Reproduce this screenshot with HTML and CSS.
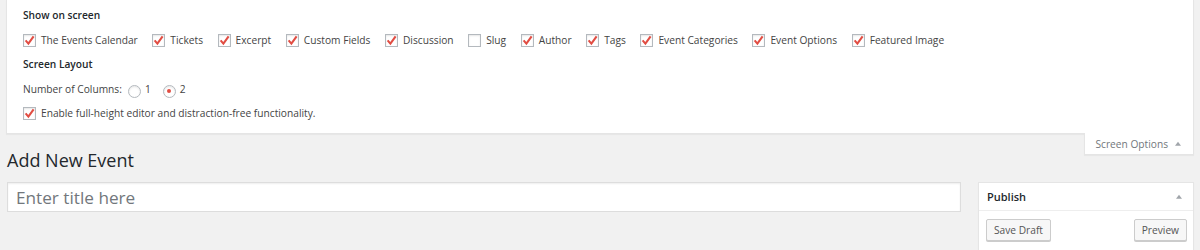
FILE: index.html
```html
<!DOCTYPE html>
<html lang="en">
<head>
<meta charset="utf-8">
<title>Add New Event</title>
<link rel="stylesheet" href="styles.css">
</head>
<body>
<div class="wrap">
  <div class="screen-meta">
    <h5 class="sm-title">Show on screen</h5>
    <div class="cb-row">
      <label class="opt"><span class="cb"><svg viewBox="0 0 13 13"><polyline points="2.6,6.4 5.4,9.6 10.6,2.4"/></svg></span>The Events Calendar</label>
      <label class="opt"><span class="cb"><svg viewBox="0 0 13 13"><polyline points="2.6,6.4 5.4,9.6 10.6,2.4"/></svg></span>Tickets</label>
      <label class="opt"><span class="cb"><svg viewBox="0 0 13 13"><polyline points="2.6,6.4 5.4,9.6 10.6,2.4"/></svg></span>Excerpt</label>
      <label class="opt"><span class="cb"><svg viewBox="0 0 13 13"><polyline points="2.6,6.4 5.4,9.6 10.6,2.4"/></svg></span>Custom Fields</label>
      <label class="opt"><span class="cb"><svg viewBox="0 0 13 13"><polyline points="2.6,6.4 5.4,9.6 10.6,2.4"/></svg></span>Discussion</label>
      <label class="opt"><span class="cb"></span>Slug</label>
      <label class="opt"><span class="cb"><svg viewBox="0 0 13 13"><polyline points="2.6,6.4 5.4,9.6 10.6,2.4"/></svg></span>Author</label>
      <label class="opt"><span class="cb"><svg viewBox="0 0 13 13"><polyline points="2.6,6.4 5.4,9.6 10.6,2.4"/></svg></span>Tags</label>
      <label class="opt"><span class="cb"><svg viewBox="0 0 13 13"><polyline points="2.6,6.4 5.4,9.6 10.6,2.4"/></svg></span>Event Categories</label>
      <label class="opt"><span class="cb"><svg viewBox="0 0 13 13"><polyline points="2.6,6.4 5.4,9.6 10.6,2.4"/></svg></span>Event Options</label>
      <label class="opt"><span class="cb"><svg viewBox="0 0 13 13"><polyline points="2.6,6.4 5.4,9.6 10.6,2.4"/></svg></span>Featured Image</label>
    </div>
    <h5 class="sm-title layout">Screen Layout</h5>
    <div class="cols-row">
      <span class="cols-label">Number of Columns:</span>
      <label class="ropt"><span class="radio"></span>1</label>
      <label class="ropt"><span class="radio on"></span>2</label>
    </div>
    <div class="cb-row enable">
      <label class="opt"><span class="cb"><svg viewBox="0 0 13 13"><polyline points="2.6,6.4 5.4,9.6 10.6,2.4"/></svg></span>Enable full-height editor and distraction-free functionality.</label>
    </div>
  </div>

  <div class="head-row">
    <h1 class="page-title">Add New Event</h1>
    <div class="so-tab">Screen Options <svg class="arr" viewBox="0 0 7 5"><polygon points="0,5 3.5,0.5 7,5"/></svg></div>
  </div>

  <div class="main">
    <div class="body-col">
      <input class="title-input" type="text" placeholder="Enter title here">
    </div>
    <div class="side">
      <div class="postbox">
        <div class="hndle"><span>Publish</span><svg class="arr" viewBox="0 0 7 5"><polygon points="0,5 3.5,0.5 7,5"/></svg></div>
        <div class="pub-actions">
          <span class="btn">Save Draft</span>
          <span class="btn">Preview</span>
        </div>
      </div>
    </div>
  </div>
</div>
</body>
</html>
```

FILE: styles.css
```css
* { box-sizing: border-box; }

body {
  margin: 0;
  background: #f1f1f1;
  font-family: "Open Sans", "DejaVu Sans", sans-serif;
  font-size: 10.2px;
  color: #444;
}

.wrap {
  padding: 0 6px;
}

/* Screen options panel */
.screen-meta {
  background: #fff;
  border: 1px solid #e5e5e5;
  border-top: 0;
  box-shadow: 0 1px 1px rgba(0, 0, 0, .04);
  height: 134px;
  padding: 8px 16px 0 15px;
}

.sm-title {
  margin: 0;
  font-size: 10.2px;
  font-weight: 600;
  line-height: 14px;
  color: #23282d;
  padding-left: 1px;
}

.sm-title.layout {
  margin-top: 9px;
}

.cb-row {
  display: flex;
  flex-wrap: wrap;
  margin-top: 10px;
  padding-left: 1px;
}

.cb-row.enable {
  margin-top: 8px;
}

.opt {
  display: flex;
  align-items: center;
  height: 16px;
  line-height: 16px;
  margin-right: 14.6px;
  white-space: nowrap;
}

.cb {
  width: 13px;
  height: 13px;
  border: 1px solid #b4b9be;
  background: #fff;
  box-shadow: inset 0 1px 2px rgba(0, 0, 0, .1);
  margin-right: 5px;
  display: flex;
  align-items: center;
  justify-content: center;
  flex: none;
}

.cb svg {
  width: 13px;
  height: 13px;
  overflow: visible;
}

.cb polyline {
  fill: none;
  stroke: #e14d43;
  stroke-width: 2.1;
  stroke-linecap: butt;
  stroke-linejoin: miter;
}

.cols-row {
  display: flex;
  align-items: center;
  height: 16px;
  line-height: 16px;
  margin-top: 10px;
  padding-left: 1px;
}

.cols-label {
  margin-right: 6px;
}

.ropt {
  display: flex;
  align-items: center;
  margin-right: 12px;
}

.radio {
  width: 13px;
  height: 13px;
  border-radius: 50%;
  border: 1px solid #b4b9be;
  background: #fff;
  box-shadow: inset 0 1px 2px rgba(0, 0, 0, .1);
  margin: 4px 4px 0 0;
  display: flex;
  align-items: center;
  justify-content: center;
}

.radio.on::before {
  content: "";
  width: 4px;
  height: 4px;
  border-radius: 50%;
  background: #e14d43;
}

/* heading row with tab */
.head-row {
  display: flex;
  justify-content: space-between;
  align-items: flex-start;
  padding-left: 1px;
}

.page-title {
  margin: 14px 0 0;
  font-size: 18px;
  font-weight: 400;
  line-height: 24px;
  color: #23282d;
}

.so-tab {
  margin-top: -1px;
  height: 22px;
  padding: 0 12px 0 10px;
  background: #fff;
  border: 1px solid #e5e5e5;
  border-top: 0;
  box-shadow: 0 1px 1px rgba(0, 0, 0, .04);
  color: #72777c;
  display: flex;
  align-items: center;
  white-space: nowrap;
}

.arr {
  width: 6px;
  height: 5px;
  margin-left: 7px;
}

.arr polygon {
  fill: #a0a5aa;
}

/* main columns */
.main {
  display: flex;
  gap: 17px;
  margin-top: 10px;
  padding-left: 1px;
}

.body-col {
  flex: 1;
}

.title-input {
  display: block;
  width: 100%;
  height: 30px;
  margin: 0;
  padding: 0 8px;
  border: 1px solid #ddd;
  box-shadow: inset 0 1px 2px rgba(0, 0, 0, .07);
  background: #fff;
  font-family: "Open Sans", "DejaVu Sans", sans-serif;
  font-size: 17.2px;
  color: #32373c;
  outline: none;
}

.title-input::placeholder {
  color: #72777c;
}

.side {
  width: 216px;
  flex: none;
}

.postbox {
  background: #fff;
  border: 1px solid #e5e5e5;
  box-shadow: 0 1px 1px rgba(0, 0, 0, .04);
  height: 80px;
}

.hndle {
  display: flex;
  align-items: center;
  justify-content: space-between;
  height: 28px;
  padding: 0 11px 0 8px;
  border-bottom: 1px solid #eee;
  font-size: 11px;
  font-weight: 600;
  color: #23282d;
}

.hndle .arr {
  margin-left: 0;
}

.pub-actions {
  display: flex;
  justify-content: space-between;
  padding: 8px 6px 0 7px;
}

.btn {
  display: inline-flex;
  align-items: center;
  height: 22px;
  padding: 0 7px;
  border: 1px solid #ccc;
  border-radius: 2px;
  background: #f7f7f7;
  box-shadow: 0 1px 0 #ccc;
  color: #555;
  font-size: 10.2px;
  white-space: nowrap;
}
```
